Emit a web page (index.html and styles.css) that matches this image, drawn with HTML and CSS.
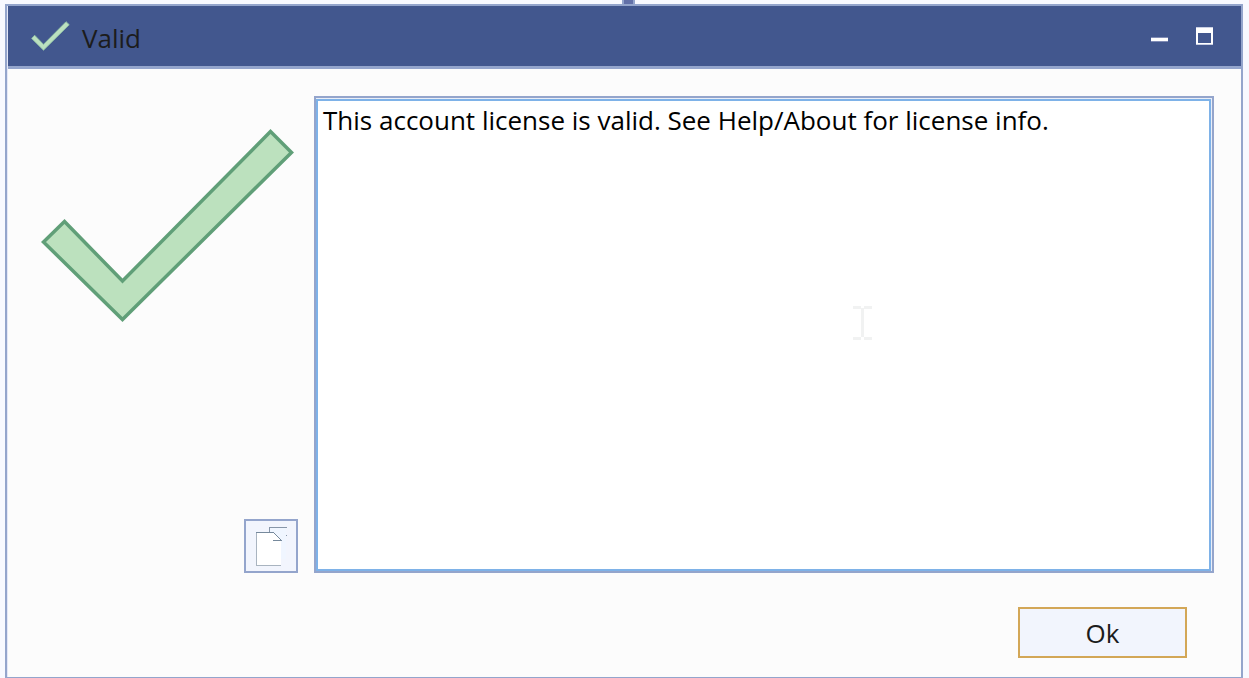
FILE: index.html
```
<!DOCTYPE html>
<html lang="en">
<head>
  <meta charset="UTF-8">
  <meta name="viewport" content="width=device-width, initial-scale=1.0">
  <title>Valid</title>
  <link rel="stylesheet" href="styles.css">
</head>
<body>
  <div class="handle"></div>
  <div class="window">
    <header class="titlebar">
      <svg class="title-icon" viewBox="0 0 256 196" aria-hidden="true">
        <polygon points="4,114 24,93 82,153 230,4 251,24 82,191"/>
      </svg>
      <h1>Valid</h1>
      <button class="win-button" type="button" aria-label="Minimize">
        <svg width="17" height="18" viewBox="0 0 17 18" shape-rendering="crispEdges">
          <rect x="0" y="10" width="17" height="5" fill="#7f8bb5"/>
          <rect x="0" y="11" width="17" height="3" fill="#fff"/>
        </svg>
      </button>
      <button class="win-button" type="button" aria-label="Maximize">
        <svg width="17" height="18" viewBox="0 0 17 18" shape-rendering="crispEdges">
          <path d="M0 0h17v18H0z" fill="#c9cfe3"/>
          <path d="M0 1h17v16H0z" fill="#fff"/>
          <path d="M2 6h13v10H2z" fill="#42578e"/>
        </svg>
      </button>
    </header>
    <main class="content">
      <div class="side">
        <svg class="check" width="256" height="196" viewBox="0 0 256 196" aria-hidden="true">
          <polygon points="3.5,114 24.5,93.5 82.5,153 230.5,3.5 251.5,24.5 82.5,191.5" stroke-width="3.5"/>
        </svg>
        <button class="copy" type="button" aria-label="Copy message">
          <svg width="32" height="40" viewBox="0 0 32 40" shape-rendering="crispEdges">
            <path d="M14 1h17v32H14z" fill="#f0f6ff"/>
            <path d="M14 6V1h18M31 9h1" fill="none" stroke="#8796a8"/>
            <path d="M1 6h17l8 8v25H1z" fill="#fff"/>
            <path d="M1 6v33h25" fill="none" stroke="#a9b4c0"/>
            <path d="M1 6h17l8 8h-8" fill="none" stroke="#76899c"/>
          </svg>
        </button>
      </div>
      <div class="message-box">
        <textarea class="message" aria-label="Message" readonly spellcheck="false">This account license is valid. See Help/About for license info.</textarea>
        <svg class="cursor" width="20" height="34" viewBox="0 0 20 34" aria-hidden="true" shape-rendering="crispEdges">
          <path d="M0 0h8v3H0zM11 0h8v3h-8zM8 2h3v29H8zM0 31h8v3H0zM11 31h8v3h-8z" fill="#f1f2f2"/>
        </svg>
      </div>
    </main>
    <footer class="actions">
      <button class="ok" type="button">Ok</button>
    </footer>
  </div>
</body>
</html>
```
FILE: styles.css
```
* {
  box-sizing: border-box;
}
body {
  display: flex;
  min-height: 100vh;
  margin: 0;
  padding: 4px 6px 0 5px;
  background-color: #f8f9ff;
  color: #1c1c1c;
  font-family: "Open Sans", "Noto Sans", sans-serif;
}
button {
  padding: 0;
  font-family: inherit;
  cursor: pointer;
}
/* bit of the window behind, sticking out above the title bar */
.handle {
  position: absolute;
  top: 0;
  left: 50%;
  width: 13px;
  height: 4px;
  margin-left: -3px;
  border: solid #94a5cc;
  border-width: 0 2px;
  background-color: #6270a8;
}
.window {
  display: flex;
  flex: 1;
  flex-direction: column;
  border: 2px solid #94a5cc;
  border-bottom-width: 1px;
  background-color: #fcfcfc;
  box-shadow: inset 1px 0 #e4e7f8;
}
.titlebar {
  display: flex;
  align-items: center;
  height: 63px;
  margin-left: 1px;
  padding: 0 14px 0 23px;
  border-bottom: 3px solid #94a5cc;
  background-color: #42578e;
}
.title-icon {
  width: 39px;
  height: 30px;
}
.title-icon polygon {
  fill: #bbe0bf;
  stroke: #8fc0a4;
  stroke-width: 6px;
}
h1 {
  flex: 1;
  margin: 0 0 0 12px;
  padding-top: 4px;
  font-size: 26px;
  font-weight: normal;
  line-height: 36px;
}
.win-button {
  display: flex;
  align-items: center;
  justify-content: center;
  width: 45px;
  height: 40px;
  border: 0;
  background: none;
}
.content {
  display: flex;
  flex: 1;
  gap: 16px;
  padding: 27px 27px 0 0;
}
.side {
  display: flex;
  flex-direction: column;
  justify-content: space-between;
  align-items: flex-end;
  width: 291px;
  padding-top: 32px;
}
.check {
  margin-right: 2px;
}
.check polygon {
  fill: #bce1be;
  stroke: #609f78;
}
.copy {
  display: flex;
  align-items: center;
  justify-content: center;
  width: 54px;
  height: 54px;
  border: 2px solid #94a5cc;
  background-color: #f2f5fd;
}
.message-box {
  position: relative;
  display: flex;
  flex: 1;
  padding: 1px 1px 0 0;
  border: 2px solid #94a5cc;
  background-color: #e9eef8;
}
.message {
  flex: 1;
  margin: 0;
  padding: 1px 5px;
  border: 2px solid #7eb2e8;
  outline: 0;
  background-color: #fff;
  color: #000;
  font-family: inherit;
  font-size: 26px;
  line-height: 36px;
  resize: none;
}
.cursor {
  position: absolute;
  top: 208px;
  right: 339px;
}
.actions {
  display: flex;
  justify-content: flex-end;
  padding: 34px 54px 19px 0;
}
.ok {
  width: 169px;
  height: 51px;
  border: 2px solid #d3a757;
  background-color: #f2f5fd;
  color: #1c1c1c;
  font-size: 26px;
}
```
